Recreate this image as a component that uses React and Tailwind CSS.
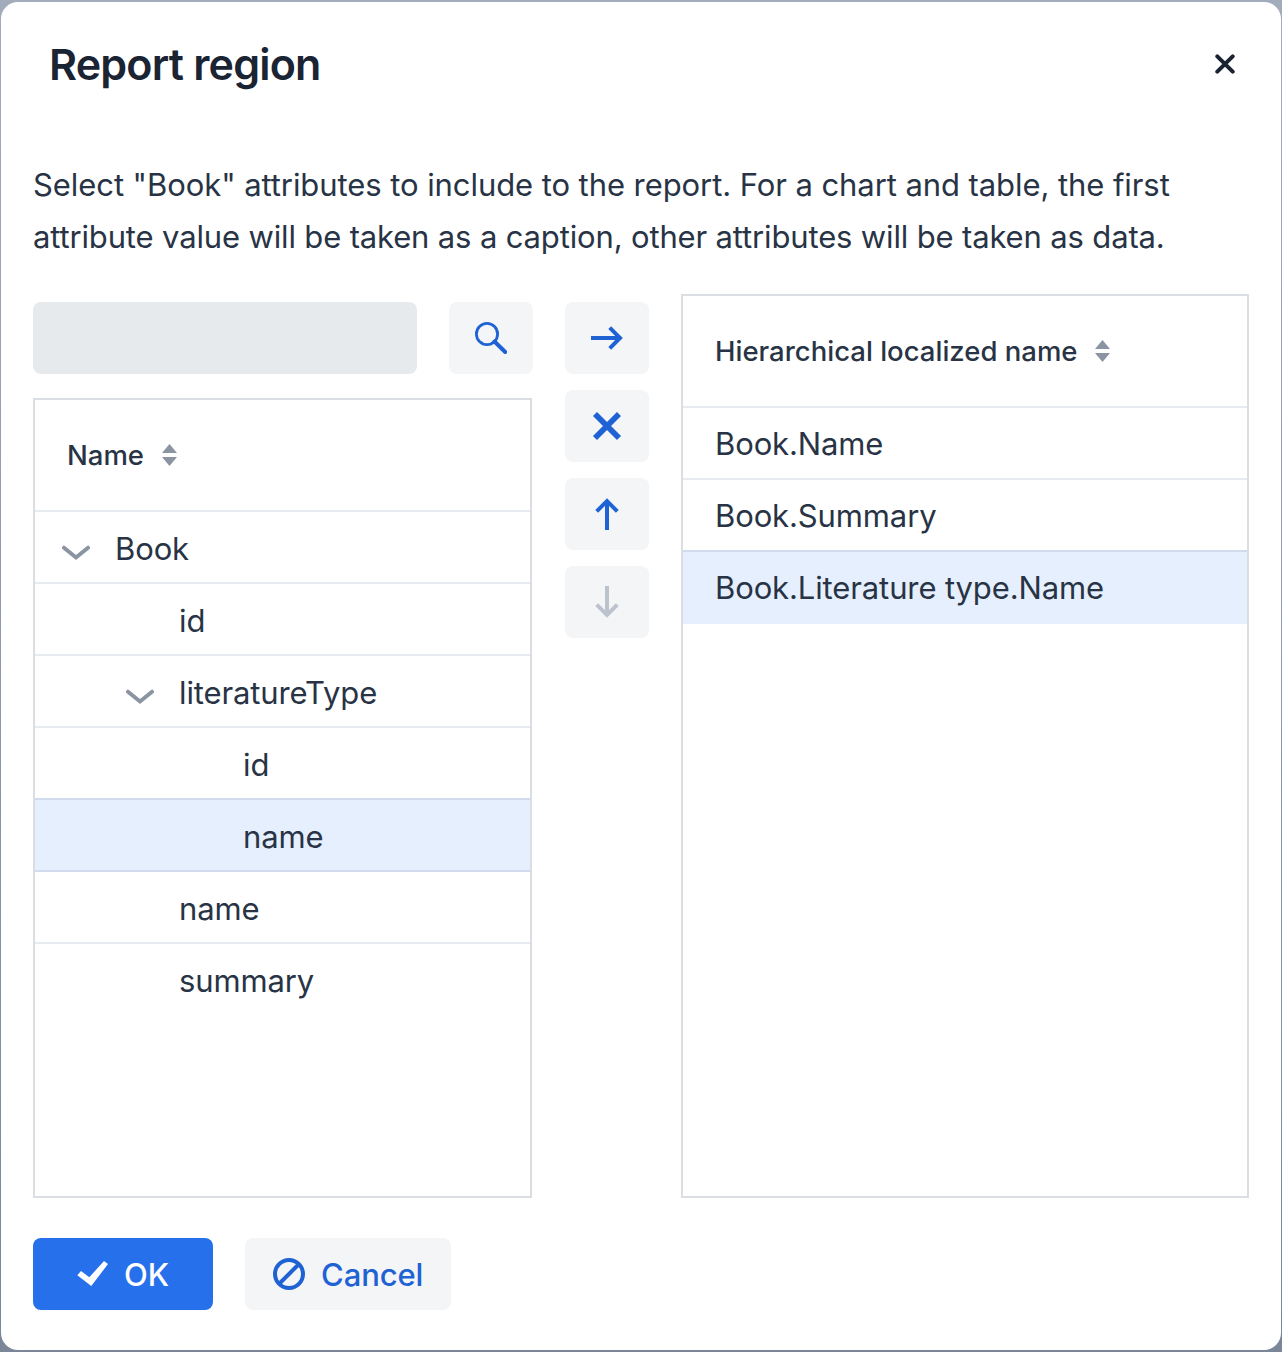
import React from "react";

function SvgIcon({ children, className = "" }) {
  return (
    <svg viewBox="0 0 32 32" className={"h-8 w-8 shrink-0 " + className} fill="none" stroke="currentColor">
      {children}
    </svg>
  );
}

function SearchIcon() {
  return (
    <SvgIcon>
      <circle cx="12" cy="12" r="10.6" strokeWidth="2.8" />
      <path d="M19.5 19.5L30.2 30" strokeWidth="4" strokeLinecap="round" />
    </SvgIcon>
  );
}

function ArrowIcon({ className }) {
  return (
    <SvgIcon className={className}>
      <path d="M0 16H29" strokeWidth="4" />
      <path d="M18.7 5.7L29 16L18.7 26.3" strokeWidth="4" />
    </SvgIcon>
  );
}

function CrossIcon() {
  return (
    <SvgIcon>
      <path d="M4 4L28 28M28 4L4 28" strokeWidth="5.7" />
    </SvgIcon>
  );
}

function CheckIcon() {
  return (
    <SvgIcon>
      <path d="M0.3 17.3L4 13L12.3 19.3L27 3L31 6L14.3 28Z" fill="currentColor" stroke="none" />
    </SvgIcon>
  );
}

function BanIcon() {
  return (
    <SvgIcon>
      <circle cx="16" cy="16" r="14" strokeWidth="4" />
      <path d="M6.5 25.5L25.5 6.5" strokeWidth="4" />
    </SvgIcon>
  );
}

function Sorter() {
  return (
    <svg viewBox="0 0 15 22" className="h-[22px] w-[15px] shrink-0 fill-[#8b94a3]">
      <path d="M7.5 0L15 9H0Z" />
      <path d="M7.5 22L15 13H0Z" />
    </svg>
  );
}

function Chevron() {
  return (
    <svg
      viewBox="0 0 28 16"
      className="mt-[7px] h-4 w-7 shrink-0 stroke-[#8b94a3]"
      fill="none"
      strokeWidth="4"
      strokeLinecap="round"
    >
      <path d="M2 2.7L14 12.5L26 2.7" />
    </svg>
  );
}

function IconButton({ children, disabled, label }) {
  return (
    <button
      aria-label={label}
      disabled={disabled}
      className="flex h-[72px] w-[84px] items-center justify-center rounded-lg bg-[#f3f5f7] text-[#1f62d4] disabled:text-[#bcc3cc]"
    >
      {children}
    </button>
  );
}

const tree = [
  { label: "Book", pad: "pl-[27px]", open: true },
  { label: "id", pad: "pl-[144px]" },
  { label: "literatureType", pad: "pl-[91px]", open: true },
  { label: "id", pad: "pl-[208px]" },
  { label: "name", pad: "pl-[208px]", selected: true },
  { label: "name", pad: "pl-[144px]", afterSelected: true },
  { label: "summary", pad: "pl-[144px]" },
];

const columns = [
  { label: "Book.Name" },
  { label: "Book.Summary" },
  { label: "Book.Literature type.Name", selected: true },
];

function rowTone(row) {
  if (row.selected) return "border-[#d0dcee] bg-[#e6effe]";
  if (row.afterSelected) return "border-[#d0dcee]";
  return "border-[#e7eaee]";
}

export default function App() {
  return (
    <div className="h-[1352px] w-[1282px] bg-linear-to-b from-[#a3acba] to-[#7b8798] px-px py-0.5 font-['Inter',sans-serif] text-[31px] text-[#283445]">
      <div className="flex h-[1348px] flex-col rounded-[17px] bg-white px-8">
        <header className="flex h-[124px] items-center justify-between pl-4 pr-[14px]">
          <h2 className="text-[43px] leading-[52px] font-semibold tracking-[-0.8px] text-[#1a2433]">Report region</h2>
          <button aria-label="Close" className="text-[#1a2433]">
            <svg viewBox="0 0 20 20" className="h-5 w-5" fill="none" stroke="currentColor" strokeWidth="4" strokeLinecap="round">
              <path d="M2.3 2.3L17.7 17.7M17.7 2.3L2.3 17.7" />
            </svg>
          </button>
        </header>

        <p className="mt-[33px] leading-[52px] whitespace-nowrap">
          <span className="block tracking-[-0.075px]">Select "Book" attributes to include to the report. For a chart and table, the first</span>
          <span className="block tracking-[-0.15px]">attribute value will be taken as a caption, other attributes will be taken as data.</span>
        </p>

        <main className="mt-[31px] flex h-[906px] items-stretch pb-0.5">
          <section className="flex w-[500px] flex-col pt-2">
            <div className="flex gap-8">
              <input aria-label="Search" className="h-[72px] w-[384px] rounded-lg bg-[#e6eaed]" />
              <IconButton label="Find">
                <SearchIcon />
              </IconButton>
            </div>
            <div className="mt-6 h-[800px] w-[499px] border-2 border-[#dadee3]">
              <div className="flex h-[110px] items-center pl-8 text-[27.5px] font-medium">
                <span className="w-[95px] pt-0.5">Name</span>
                <Sorter />
              </div>
              {tree.map((row, i) => (
                <div key={i} className={"flex h-[72px] items-center gap-[25px] border-t-2 pt-1 tracking-[-0.12px] " + row.pad + " " + rowTone(row)}>
                  {row.open && <Chevron />}
                  <span>{row.label}</span>
                </div>
              ))}
            </div>
          </section>

          <nav className="ml-8 flex flex-col gap-4 pt-2">
            <IconButton label="Add">
              <ArrowIcon />
            </IconButton>
            <IconButton label="Remove">
              <CrossIcon />
            </IconButton>
            <IconButton label="Move up">
              <ArrowIcon className="-rotate-90" />
            </IconButton>
            <IconButton label="Move down" disabled>
              <ArrowIcon className="rotate-90" />
            </IconButton>
          </nav>

          <section className="ml-8 h-[904px] w-[568px] border-2 border-[#dadee3]">
            <div className="flex h-[110px] items-center pl-8 text-[27.5px] font-medium">
              <span className="w-[380px] pt-0.5">Hierarchical localized name</span>
              <Sorter />
            </div>
            {columns.map((row) => (
              <div
                key={row.label}
                className={"flex h-[72px] items-center border-t-2 pt-0.5 pl-8 tracking-[-0.12px] last:h-[74px] last:pb-0.5 " + rowTone(row)}
              >
                <span>{row.label}</span>
              </div>
            ))}
          </section>
        </main>

        <footer className="mt-[38px] flex gap-8 font-medium tracking-[-0.1px]">
          <button className="flex h-[72px] w-[180px] items-center gap-[15px] rounded-lg bg-[#2670eb] pl-11 text-white">
            <CheckIcon />
            <span className="pt-0.5">OK</span>
          </button>
          <button className="flex h-[72px] w-[206px] items-center gap-4 rounded-lg bg-[#f3f5f7] pl-7 text-[#1f62d4]">
            <BanIcon />
            <span className="pt-0.5">Cancel</span>
          </button>
        </footer>
      </div>
    </div>
  );
}
